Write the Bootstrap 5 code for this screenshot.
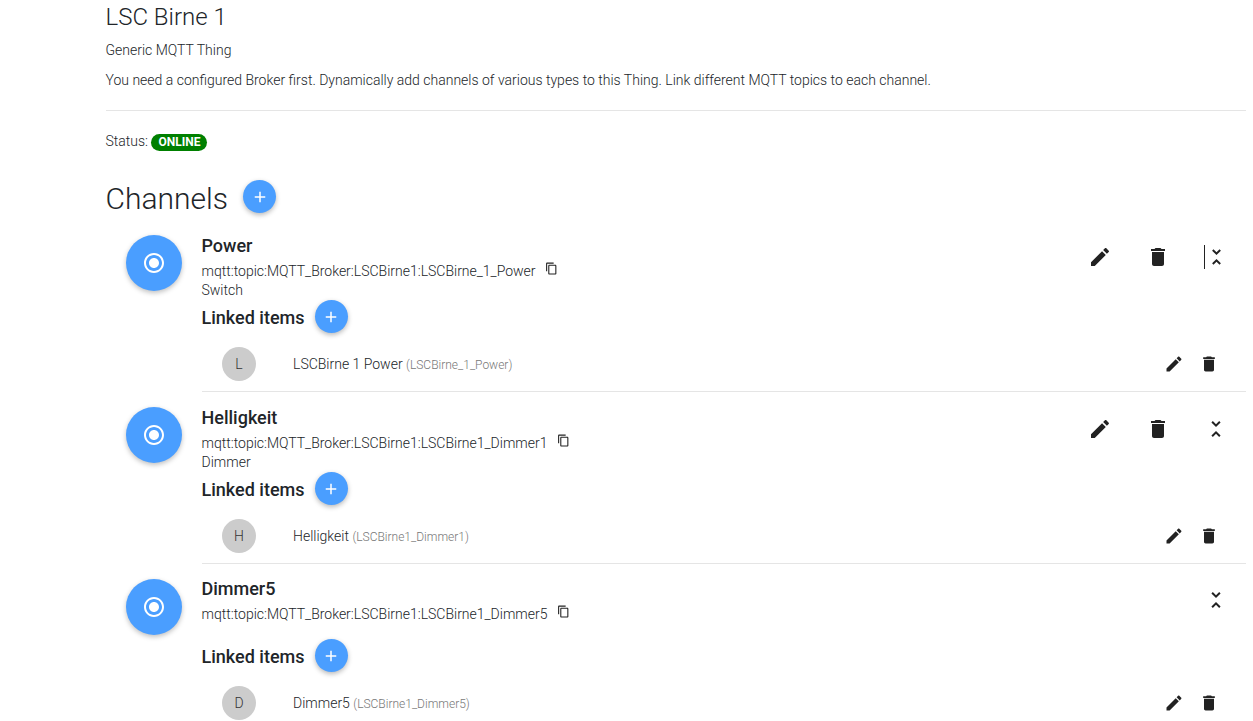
<!DOCTYPE html>
<html lang="en">
<head>
  <meta charset="UTF-8">
  <meta name="viewport" content="width=device-width, initial-scale=1.0">
  <title>LSC Birne 1</title>
  <link href="https://cdn.jsdelivr.net/npm/bootstrap@5.3.3/dist/css/bootstrap.min.css" rel="stylesheet">
  <script src="https://cdn.jsdelivr.net/npm/bootstrap@5.3.3/dist/js/bootstrap.bundle.min.js"></script>
  <style>
    html, body { height: 721px; overflow: hidden; }
    body { font-family: Roboto, "Liberation Sans", sans-serif; font-size: 14px; font-weight: 300; color: #212529; background: #fff; }
    .page-wrap { padding: 0 7px 0 105.5px; }
    .thing-title { font-size: 24px; font-weight: 300; line-height: 28px; margin: 3px 0 0; }
    .thing-line { line-height: 20px; margin: 0; }
    .thing-type { margin-top: 9px; }
    .thing-desc { margin-top: 10px; }
    .rule { height: 1px; background: #e5e5e5; margin-top: 20px; }
    .status-row { margin-top: 20px; line-height: 20px; height: 20px; }
    .status-pill { background: #008000; color: #fff; font-size: 12px; font-weight: 700; line-height: 17px; border-radius: 9px; padding: 0 7px; display: inline-block; }
    .channels-head { margin-top: 29px; height: 33px; }
    .channels-title { font-size: 30px; font-weight: 300; line-height: 36px; margin: 0 15px 0 0; padding-top: 4px; }
    .add-btn { width: 33px; height: 33px; border-radius: 50%; border: 0; padding: 0; background: #4a9eff; color: #fff; box-shadow: 0 2px 5px rgba(0,0,0,.28); display: flex; align-items: center; justify-content: center; flex: none; }
    .add-btn svg { width: 18px; height: 18px; fill: #fff; }
    .channel-list { margin-top: 22px; }
    .channel-row { padding-left: 20.5px; padding-bottom: 15px; }
    .channel-row.is-last { margin-top: -1px; padding-bottom: 0; }
    .channel-pic { width: 56px; height: 56px; border-radius: 50%; background: #4a9eff; box-shadow: 0 2px 5px rgba(0,0,0,.25); margin-right: 19.5px; flex: none; display: flex; align-items: center; justify-content: center; }
    .channel-pic.is-low { margin-top: 1px; }
    .channel-pic svg { width: 24px; height: 24px; fill: #fff; }
    .channel-body { flex: 1 1 auto; min-width: 0; }
    .channel-name { font-size: 18px; font-weight: 500; line-height: 22px; margin: 0; }
    .channel-uid { line-height: 20px; margin-top: 4px; color: #212529; }
    .channel-kind { line-height: 20px; margin-top: -1px; color: #212529; }
    .kind-gap { height: 15px; }
    .copy-icon { width: 13px; height: 13px; margin-left: 6px; vertical-align: 1px; fill: #222; }
    .linked-row { height: 33px; }
    .linked-title { font-size: 18px; font-weight: 500; margin: 0 10.5px 0 0; line-height: 33px; padding-top: 1px; }
    .item-row { margin-top: 14px; height: 34px; padding-left: 20.5px; }
    .item-pic { width: 34px; height: 34px; border-radius: 50%; background: #ccc; color: #333; line-height: 34px; text-align: center; margin-right: 37px; flex: none; }
    .item-name { color: #212529; }
    .item-ref { font-size: 12px; color: #777; }
    .row-rule { height: 1px; background: #e5e5e5; margin-top: 10px; }
    .icon-act { display: flex; align-items: center; justify-content: center; background: none; border: 0; padding: 0; }
    .icon-act svg { fill: #222; }
    .big-acts { height: 24px; margin-top: 10px; padding-right: 18px; }
    .big-acts .icon-act { width: 24px; height: 24px; margin-left: 34px; }
    .big-acts svg { width: 24px; height: 24px; }
    .small-acts { padding-right: 27px; }
    .small-acts .icon-act { width: 20px; height: 20px; margin-left: 15px; }
    .small-acts svg { width: 20px; height: 20px; }
    .fold-focus { border-left: 1px solid #222; }
  </style>
</head>
<body>
  <svg width="0" height="0" class="d-none">
    <symbol id="i-add" viewBox="0 0 24 24"><path d="M19 13h-6v6h-2v-6H5v-2h6V5h2v6h6v2z"/></symbol>
    <symbol id="i-radio" viewBox="0 0 24 24"><path d="M12 7c-2.76 0-5 2.24-5 5s2.24 5 5 5 5-2.24 5-5-2.24-5-5-5zm0-5C6.48 2 2 6.48 2 12s4.48 10 10 10 10-4.48 10-10S17.52 2 12 2zm0 18c-4.42 0-8-3.58-8-8s3.58-8 8-8 8 3.58 8 8-3.58 8-8 8z"/></symbol>
    <symbol id="i-edit" viewBox="0 0 24 24"><path d="M3 17.25V21h3.75L17.81 9.94l-3.75-3.75L3 17.25zM20.71 7.04c.39-.39.39-1.02 0-1.41l-2.34-2.34c-.39-.39-1.02-.39-1.41 0l-1.83 1.83 3.75 3.75 1.83-1.83z"/></symbol>
    <symbol id="i-trash" viewBox="0 0 24 24"><path d="M6 19c0 1.1.9 2 2 2h8c1.1 0 2-.9 2-2V7H6v12zM19 4h-3.5l-1-1h-5l-1 1H5v2h14V4z"/></symbol>
    <symbol id="i-fold" viewBox="0 0 24 24"><path d="M7.41 18.59L8.83 20 12 16.83 15.17 20l1.41-1.41L12 14l-4.59 4.59zm9.18-13.18L15.17 4 12 7.17 8.83 4 7.41 5.41 12 10l4.59-4.59z"/></symbol>
    <symbol id="i-copy" viewBox="0 0 24 24"><path d="M16 1H4c-1.1 0-2 .9-2 2v14h2V3h12V1zm3 4H8c-1.1 0-2 .9-2 2v14c0 1.1.9 2 2 2h11c1.1 0 2-.9 2-2V7c0-1.1-.9-2-2-2zm0 16H8V7h11v14z"/></symbol>
  </svg>

  <div class="page-wrap">
    <h1 class="thing-title">LSC Birne 1</h1>
    <p class="thing-line thing-type">Generic MQTT Thing</p>
    <p class="thing-line thing-desc">You need a configured Broker first. Dynamically add channels of various types to this Thing. Link different MQTT topics to each channel.</p>
    <div class="rule"></div>
    <div class="status-row">Status: <span class="status-pill">ONLINE</span></div>

    <div class="channels-head d-flex align-items-center">
      <h2 class="channels-title">Channels</h2>
      <button class="add-btn" type="button"><svg><use href="#i-add"/></svg></button>
    </div>

    <div class="channel-list">
      <!-- Power -->
      <div class="channel-row d-flex">
        <div class="channel-pic"><svg><use href="#i-radio"/></svg></div>
        <div class="channel-body">
          <div class="d-flex justify-content-between">
            <div>
              <h3 class="channel-name">Power</h3>
              <div class="channel-uid">mqtt:topic:MQTT_Broker:LSCBirne1:LSCBirne_1_Power <svg class="copy-icon"><use href="#i-copy"/></svg></div>
              <div class="channel-kind">Switch</div>
            </div>
            <div class="big-acts d-flex">
              <button class="icon-act" type="button"><svg><use href="#i-edit"/></svg></button>
              <button class="icon-act" type="button"><svg><use href="#i-trash"/></svg></button>
              <button class="icon-act fold-focus" type="button"><svg><use href="#i-fold"/></svg></button>
            </div>
          </div>
          <div class="linked-row d-flex align-items-center">
            <h4 class="linked-title">Linked items</h4>
            <button class="add-btn" type="button"><svg><use href="#i-add"/></svg></button>
          </div>
          <div class="item-row d-flex align-items-center">
            <div class="item-pic">L</div>
            <div class="flex-grow-1"><span class="item-name">LSCBirne 1 Power</span> <span class="item-ref">(LSCBirne_1_Power)</span></div>
            <div class="small-acts d-flex">
              <button class="icon-act" type="button"><svg><use href="#i-edit"/></svg></button>
              <button class="icon-act" type="button"><svg><use href="#i-trash"/></svg></button>
            </div>
          </div>
          <div class="row-rule"></div>
        </div>
      </div>

      <!-- Helligkeit -->
      <div class="channel-row d-flex">
        <div class="channel-pic"><svg><use href="#i-radio"/></svg></div>
        <div class="channel-body">
          <div class="d-flex justify-content-between">
            <div>
              <h3 class="channel-name">Helligkeit</h3>
              <div class="channel-uid">mqtt:topic:MQTT_Broker:LSCBirne1:LSCBirne1_Dimmer1 <svg class="copy-icon"><use href="#i-copy"/></svg></div>
              <div class="channel-kind">Dimmer</div>
            </div>
            <div class="big-acts d-flex">
              <button class="icon-act" type="button"><svg><use href="#i-edit"/></svg></button>
              <button class="icon-act" type="button"><svg><use href="#i-trash"/></svg></button>
              <button class="icon-act" type="button"><svg><use href="#i-fold"/></svg></button>
            </div>
          </div>
          <div class="linked-row d-flex align-items-center">
            <h4 class="linked-title">Linked items</h4>
            <button class="add-btn" type="button"><svg><use href="#i-add"/></svg></button>
          </div>
          <div class="item-row d-flex align-items-center">
            <div class="item-pic">H</div>
            <div class="flex-grow-1"><span class="item-name">Helligkeit</span> <span class="item-ref">(LSCBirne1_Dimmer1)</span></div>
            <div class="small-acts d-flex">
              <button class="icon-act" type="button"><svg><use href="#i-edit"/></svg></button>
              <button class="icon-act" type="button"><svg><use href="#i-trash"/></svg></button>
            </div>
          </div>
          <div class="row-rule"></div>
        </div>
      </div>

      <!-- Dimmer5 -->
      <div class="channel-row is-last d-flex">
        <div class="channel-pic is-low"><svg><use href="#i-radio"/></svg></div>
        <div class="channel-body">
          <div class="d-flex justify-content-between">
            <div>
              <h3 class="channel-name">Dimmer5</h3>
              <div class="channel-uid">mqtt:topic:MQTT_Broker:LSCBirne1:LSCBirne1_Dimmer5 <svg class="copy-icon"><use href="#i-copy"/></svg></div>
              <div class="kind-gap"></div>
            </div>
            <div class="big-acts d-flex">
              <button class="icon-act" type="button"><svg><use href="#i-fold"/></svg></button>
            </div>
          </div>
          <div class="linked-row d-flex align-items-center">
            <h4 class="linked-title">Linked items</h4>
            <button class="add-btn" type="button"><svg><use href="#i-add"/></svg></button>
          </div>
          <div class="item-row d-flex align-items-center">
            <div class="item-pic">D</div>
            <div class="flex-grow-1"><span class="item-name">Dimmer5</span> <span class="item-ref">(LSCBirne1_Dimmer5)</span></div>
            <div class="small-acts d-flex">
              <button class="icon-act" type="button"><svg><use href="#i-edit"/></svg></button>
              <button class="icon-act" type="button"><svg><use href="#i-trash"/></svg></button>
            </div>
          </div>
        </div>
      </div>
    </div>
  </div>
</body>
</html>
